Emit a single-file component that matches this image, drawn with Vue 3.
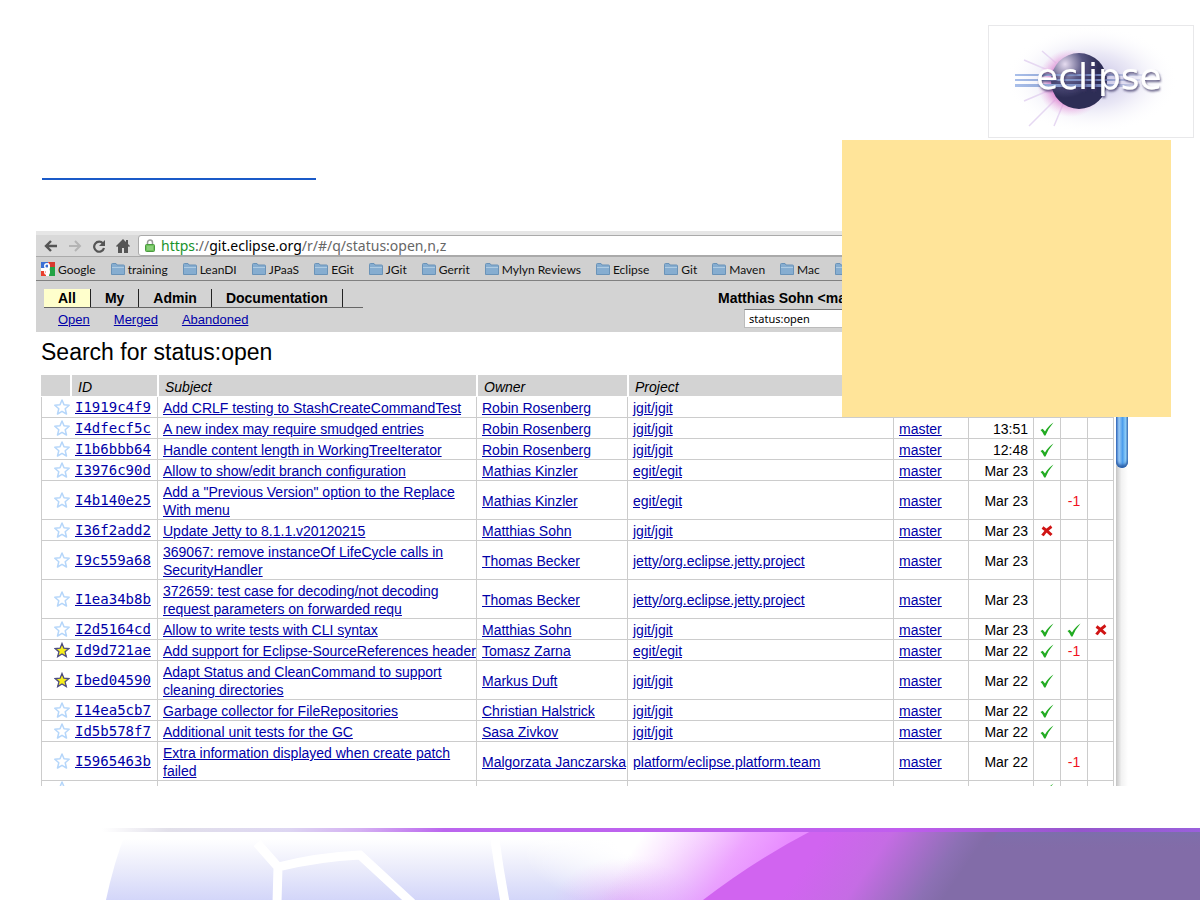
<script setup>
const bookmarks = ['training', 'LeanDI', 'JPaaS', 'EGit', 'JGit', 'Gerrit', 'Mylyn Reviews', 'Eclipse', 'Git', 'Maven', 'Mac', '']
const tabs = ['All', 'My', 'Admin', 'Documentation']
const filters = ['Open', 'Merged', 'Abandoned']

const row = (id, subject, owner, project, date, marks = [], starred = false) => ({ id, subject, owner, project, date, marks, starred })
const changes = [
  row('I1919c4f9', 'Add CRLF testing to StashCreateCommandTest', 'Robin Rosenberg', 'jgit/jgit', ''),
  row('I4dfecf5c', 'A new index may require smudged entries', 'Robin Rosenberg', 'jgit/jgit', '13:51', ['ok']),
  row('I1b6bbb64', 'Handle content length in WorkingTreeIterator', 'Robin Rosenberg', 'jgit/jgit', '12:48', ['ok']),
  row('I3976c90d', 'Allow to show/edit branch configuration', 'Mathias Kinzler', 'egit/egit', 'Mar 23', ['ok']),
  row('I4b140e25', 'Add a "Previous Version" option to the Replace\nWith menu', 'Mathias Kinzler', 'egit/egit', 'Mar 23', ['', '-1']),
  row('I36f2add2', 'Update Jetty to 8.1.1.v20120215', 'Matthias Sohn', 'jgit/jgit', 'Mar 23', ['no']),
  row('I9c559a68', '369067: remove instanceOf LifeCycle calls in\nSecurityHandler', 'Thomas Becker', 'jetty/org.eclipse.jetty.project', 'Mar 23'),
  row('I1ea34b8b', '372659: test case for decoding/not decoding\nrequest parameters on forwarded requ', 'Thomas Becker', 'jetty/org.eclipse.jetty.project', 'Mar 23'),
  row('I2d5164cd', 'Allow to write tests with CLI syntax', 'Matthias Sohn', 'jgit/jgit', 'Mar 23', ['ok', 'ok', 'no']),
  row('Id9d721ae', 'Add support for Eclipse-SourceReferences header', 'Tomasz Zarna', 'egit/egit', 'Mar 22', ['ok', '-1'], true),
  row('Ibed04590', 'Adapt Status and CleanCommand to support\ncleaning directories', 'Markus Duft', 'jgit/jgit', 'Mar 22', ['ok'], true),
  row('I14ea5cb7', 'Garbage collector for FileRepositories', 'Christian Halstrick', 'jgit/jgit', 'Mar 22', ['ok']),
  row('Id5b578f7', 'Additional unit tests for the GC', 'Sasa Zivkov', 'jgit/jgit', 'Mar 22', ['ok']),
  row('I5965463b', 'Extra information displayed when create patch\nfailed', 'Malgorzata Janczarska', 'platform/eclipse.platform.team', 'Mar 22', ['', '-1']),
  row('', '', '', '', '', ['ok'])
]
</script>

<template>
  <div class="slide">
    <header class="slide-head">
      <svg class="logo" viewBox="0 0 206 113" role="img" aria-label="eclipse">
        <defs>
          <radialGradient id="halo"><stop offset="0" stop-color="#8a82c8" stop-opacity=".75" /><stop offset=".5" stop-color="#b8b2e0" stop-opacity=".4" /><stop offset="1" stop-color="#fff" stop-opacity="0" /></radialGradient>
          <radialGradient id="pink"><stop offset=".6" stop-color="#d958c0" stop-opacity=".85" /><stop offset="1" stop-color="#f0a0e0" stop-opacity="0" /></radialGradient>
          <radialGradient id="ball" cx=".25" cy=".2" r=".8"><stop offset="0" stop-color="#e6dcf0" /><stop offset=".4" stop-color="#575582" /><stop offset=".75" stop-color="#2d2d55" /></radialGradient>
          <linearGradient id="beam" gradientUnits="userSpaceOnUse" x1="27" y1="0" x2="177" y2="0"><stop offset="0" stop-color="#a9bfea" /><stop offset=".55" stop-color="#7182b8" /><stop offset="1" stop-color="#d0d4f0" stop-opacity="0" /></linearGradient>
          <filter id="glyphShadow" x="-10%" y="-20%" width="120%" height="150%"><feDropShadow dx="1" dy="2" stdDeviation="1.2" flood-color="#3c3868" flood-opacity=".8" /></filter>
        </defs>
        <rect x=".5" y=".5" width="205" height="112" fill="#fff" stroke="#e8e8ea" />
        <ellipse cx="104" cy="55" rx="86" ry="54" fill="url(#halo)" opacity=".75" />
        <path d="M36 35l26 11M54 26l14 12M36 76l26-11M41 101l26-26M66 101l10-24" stroke="#e6d8f2" stroke-width="1.5" fill="none" />
        <circle cx="83" cy="58" r="34" fill="url(#pink)" opacity=".7" />
        <circle cx="91" cy="56" r="28" fill="url(#ball)" />
        <g fill="url(#beam)"><rect x="27" y="49" width="150" height="2" /><rect x="27" y="54" width="125" height="2" /><rect x="27" y="59" width="125" height="3" /></g>
        <text x="48" y="64" class="wordmark" filter="url(#glyphShadow)">eclipse</text>
      </svg>
      <div class="rule"></div>
    </header>

    <main class="browser">
      <div class="tabstrip"></div>
      <div class="toolbar">
        <button class="nav" aria-label="Back"><svg viewBox="0 0 14 14"><path d="M13 7H3M7 2L2 7l5 5" fill="none" stroke="#555" stroke-width="2.4" /></svg></button>
        <button class="nav" aria-label="Forward"><svg viewBox="0 0 14 14"><path d="M1 7h10M7 2l5 5-5 5" fill="none" stroke="#b4b4b4" stroke-width="2" /></svg></button>
        <button class="nav" aria-label="Reload"><svg viewBox="0 0 14 14"><path d="M11 4.500A5 5 0 1 0 12 9" fill="none" stroke="#555" stroke-width="2.200" /><path d="M13 1v6H7z" fill="#555" /></svg></button>
        <button class="nav" aria-label="Home"><svg viewBox="0 0 14 14"><path d="M7 0L0 7l1 1 1-.8V14h4V9h2v5h4V7.200l1 .8 1-1-2-2V1h-2v2z" fill="#555" /></svg></button>
        <div class="address">
          <svg class="lock" viewBox="0 0 10 13"><path d="M2.500 6V3.500a2.500 2.500 0 0 1 5 0V6" fill="none" stroke="#9a9a9a" stroke-width="1.500" /><rect x=".5" y="5.500" width="9" height="7" rx="1" fill="#6fc25c" stroke="#4a9a40" /><path d="M2 8h6M2 10h6" stroke="#a5dc98" /></svg>
          <span class="url"><b class="secure">https</b>://<b class="host">git.eclipse.org</b>/r/#/q/status:open,n,z</span>
        </div>
      </div>
      <nav class="bookmarks">
        <a href="#" class="google">
          <svg viewBox="0 0 14 14"><rect width="14" height="14" rx="1" fill="#fff" /><path d="M0 0h7v6H0z" fill="#3b6fd4" /><path d="M7 0h7v5H9z" fill="#d8392e" /><path d="M9 5h5v9H8z" fill="#22a345" /><path d="M0 9h5v5H0z" fill="#e8402f" /><circle cx="6" cy="4" r="2.300" fill="none" stroke="#fff" stroke-width="1.400" /><circle cx="6" cy="10" r="2.300" fill="none" stroke="#fff" stroke-width="1.400" /></svg><span>Google</span></a>
        <a v-for="b in bookmarks" :key="b" href="#">
          <svg viewBox="0 0 14 12"><path d="M.5 11.500V1.500q0-1 1-1H5l1 1.500h6.500q1 0 1 1v8.500z" fill="#86add0" stroke="#6a93b8" /><path d="M1 4.500h12" stroke="#aecbe2" /></svg><span>{{ b }}</span></a>
      </nav>

      <div class="viewport">
        <div class="page">
          <div class="menu">
            <div class="menu-left">
              <div class="tabs">
                <button v-for="(t, i) in tabs" :key="t" :class="{ active: i === 0 }">{{ t }}</button>
              </div>
              <div class="filters"><a v-for="f in filters" :key="f" href="#">{{ f }}</a></div>
            </div>
            <div class="account">
              <div class="user">Matthias Sohn &lt;mat</div>
              <input class="search" type="text" value="status:open" aria-label="Search" />
            </div>
          </div>
          <h1>Search for status:open</h1>
          <table>
            <colgroup>
              <col class="c-star" /><col class="c-id" /><col class="c-subject" /><col class="c-owner" /><col />
              <col class="c-branch" /><col class="c-date" /><col class="c-mark" /><col class="c-mark" /><col class="c-mark" />
            </colgroup>
            <thead>
              <tr><th></th><th>ID</th><th>Subject</th><th>Owner</th><th>Project</th><th></th><th></th><th></th><th></th><th></th></tr>
            </thead>
            <tbody>
              <tr v-for="c in changes" :key="c.id">
                <td class="star">
                  <svg viewBox="0 0 16 16">
                    <path v-if="c.starred" d="M8 1.500l1.900 4.700 4.900.4-3.700 3.200 1.200 4.800L8 12l-4.300 2.600 1.200-4.800L1.200 6.600l4.900-.4z" fill="#f7ee1c" stroke="#4c4c80" stroke-width="1.300" />
                    <path v-else d="M8 1l2 4.800 5.200.5-4 3.500 1.300 5.200L8 12.300 3.500 15l1.300-5.200-4-3.500L6 5.800z" fill="#fff" stroke="#b5d6fa" stroke-width="1.500" stroke-linejoin="round" />
                  </svg>
                </td>
                <td class="id"><a href="#">{{ c.id }}</a></td>
                <td><a href="#">{{ c.subject }}</a></td>
                <td><a href="#">{{ c.owner }}</a></td>
                <td><a href="#">{{ c.project }}</a></td>
                <td><a v-if="c.date" href="#">master</a></td>
                <td class="date">{{ c.date }}</td>
                <td v-for="n in 3" :key="n" class="mark">
                  <svg v-if="c.marks[n - 1] === 'ok'" viewBox="0 0 14 14"><path d="M.5 8l2.200-1.200L5 9.500Q8.500 3.500 13.500.5q-5 5.500-8 13H4.200Q3 10 .5 8z" fill="#22ab22" /></svg>
                  <svg v-else-if="c.marks[n - 1] === 'no'" viewBox="0 0 14 14"><path d="M2.500 3.500Q7.500 7 11.500 11M11.500 2.500Q6 6 2.500 11.500" fill="none" stroke="#d01414" stroke-width="3" /></svg>
                  <template v-else>{{ c.marks[n - 1] }}</template>
                </td>
              </tr>
            </tbody>
          </table>
        </div>
        <div class="scrollbar"><div class="thumb"></div></div>
      </div>
    </main>

    <svg class="footer" viewBox="0 0 1200 72" preserveAspectRatio="none" aria-hidden="true">
      <defs>
        <linearGradient id="lav" x1="0" y1="0" x2="0" y2="1"><stop offset=".1" stop-color="#fff" /><stop offset=".5" stop-color="#ecedfb" /><stop offset="1" stop-color="#d3d6f9" /></linearGradient>
        <linearGradient id="line" gradientUnits="userSpaceOnUse" x1="0" y1="0" x2="1200" y2="0"><stop offset=".085" stop-color="#fff" /><stop offset=".14" stop-color="#e2e0ea" /><stop offset=".24" stop-color="#ddd6f2" /><stop offset=".3" stop-color="#d4b0f2" /><stop offset=".37" stop-color="#bb66ee" /><stop offset=".75" stop-color="#c05eee" /><stop offset=".9" stop-color="#9556cc" /><stop offset="1" stop-color="#9a60dc" /></linearGradient>
        <radialGradient id="white" gradientUnits="userSpaceOnUse" cx="0" cy="0" r="1" gradientTransform="translate(640 14) scale(120 66)"><stop offset=".2" stop-color="#fff" /><stop offset="1" stop-color="#fff" stop-opacity="0" /></radialGradient>
        <radialGradient id="glow" gradientUnits="userSpaceOnUse" cx="0" cy="0" r="1" gradientTransform="translate(625 80) scale(75 50)"><stop offset="0" stop-color="#e38bf5" stop-opacity=".5" /><stop offset="1" stop-color="#f0b0ff" stop-opacity="0" /></radialGradient>
        <linearGradient id="edge" gradientUnits="userSpaceOnUse" x1="640" y1="10" x2="745" y2="80"><stop offset="0" stop-color="#f0b0ff" stop-opacity="0" /><stop offset=".7" stop-color="#eb95ff" stop-opacity=".85" /><stop offset="1" stop-color="#e88cff" /></linearGradient>
        <linearGradient id="violet" gradientUnits="userSpaceOnUse" x1="810" y1="30" x2="920" y2="105"><stop offset="0" stop-color="#d164f0" /><stop offset=".4" stop-color="#c56ce4" /><stop offset=".85" stop-color="#8c70b4" /><stop offset="1" stop-color="#826ca8" /></linearGradient>
        <linearGradient id="topShade" x1="0" y1="0" x2="0" y2="1"><stop offset="0" stop-color="#7672b0" /><stop offset="1" stop-color="#826ca8" stop-opacity="0" /></linearGradient>
      </defs>
      <path d="M126 4H830V72H106Q114 34 126 4z" fill="url(#lav)" />
      <path d="M257 15l21 24-1 36M278 39q40-10 82-12l52 48M495 12q4 30 10 62" fill="none" stroke="#fff" stroke-width="9" />
      <rect x="500" y="3" width="320" height="69" fill="url(#white)" />
      <rect x="540" y="3" width="180" height="69" fill="url(#glow)" />
      <path d="M560 4H830V72H560z" fill="url(#edge)" />
      <path d="M811 3Q755 32 703 72H1200V3z" fill="url(#violet)" />
      <path d="M1000 3H1200V24H980z" fill="url(#topShade)" opacity=".5" />
      <rect x="90" width="1110" height="4" fill="url(#line)" />
    </svg>

    <aside class="note"></aside>
  </div>
</template>

<style>
body { margin: 0; background: #fff; }
</style>

<style scoped>
.slide { position: relative; display: flex; flex-direction: column; height: 100vh; overflow: hidden; font-family: "Liberation Sans", Arial, sans-serif; color: #000; }
.slide-head { display: flex; flex-direction: column; flex: none; padding: 25px 6px 51px 42px; }
.logo { align-self: flex-end; width: 206px; height: 113px; }
.wordmark { font-family: "DejaVu Sans", sans-serif; font-size: 36px; fill: #fff; }
.rule { width: 274px; height: 2px; margin-top: 40px; background: #1a5ac8; }
.note { position: absolute; top: 140px; right: 29px; width: 329px; height: 277px; background: #ffe499; }

.browser { display: flex; flex-direction: column; flex: 1 1 0; min-height: 0; margin: 0 72px 42px 36px; overflow: hidden; }
.tabstrip { flex: none; height: 4px; background: #e6e6e6; }
.toolbar { display: flex; flex: none; align-items: center; height: 21px; padding-left: 7px; gap: 8px; background: #d9d9d9; border-bottom: 1px solid #aaa; }
.nav { width: 16px; height: 16px; padding: 1px; border: 0; background: none; }
.nav svg { display: block; width: 14px; height: 14px; }
.address { display: flex; flex: 1; align-items: center; gap: 6px; height: 19px; margin-left: -1px; padding-left: 6px; background: #fff; border: 1px solid #aaa; border-radius: 3px; font: 14px/19px "Noto Sans", sans-serif; color: #666; }
.lock { width: 10px; height: 13px; }
.address b { font-weight: 400; }
.address .secure { color: #18922c; }
.address .host { color: #000; }
.bookmarks { display: flex; flex: none; align-items: center; gap: 15px; height: 23px; padding-left: 5px; overflow: hidden; background: #d0d0d0; border-bottom: 1px solid #808080; font: 12px/20px Lato, sans-serif; }
.bookmarks a { display: flex; flex: none; align-items: center; gap: 3px; color: #111; text-decoration: none; }
.bookmarks span { padding-top: 3px; }
.bookmarks svg { width: 14px; height: 12px; }
.bookmarks .google svg { height: 14px; }

.viewport { display: flex; flex: 1 1 0; min-height: 0; }
.page { flex: 1; min-width: 0; padding-right: 2px; overflow: hidden; }
.menu { display: flex; height: 51px; background: #d3d3d3; }
.menu-left { flex: 1; padding: 8px 0 0 8px; }
.tabs { display: flex; width: 319px; border-bottom: 1px solid #666; }
.tabs button { height: 18px; padding: 0 14px; border: 0; border-right: 1px solid #222; background: none; font: bold 14px/18px "Liberation Sans", Arial, sans-serif; color: #000; }
.tabs button.active { background: #ffffcc; }
.filters { display: flex; gap: 24px; padding: 3px 0 0 14px; font-size: 13px; line-height: 18px; }
.account { flex: none; width: 396px; padding-top: 8px; overflow: hidden; }
.user { font-weight: bold; font-size: 14px; line-height: 19px; white-space: nowrap; }
.search { display: block; box-sizing: border-box; width: 240px; height: 19px; margin: 1px 0 0 26px; padding: 0 4px; border: 1px solid #bbb; border-top-color: #777; background: #fff; font: 11px/16px "Noto Sans", sans-serif; color: #000; }
h1 { margin: 0; padding: 6px 0 9px 5px; font-size: 23px; font-weight: 400; line-height: 28px; }

table { width: calc(100% - 5px); margin-left: 5px; table-layout: fixed; border-collapse: separate; border-spacing: 0; font-size: 14px; line-height: 18px; }
.c-star { width: 29px; }
.c-id { width: 87px; }
.c-subject { width: 319px; }
.c-owner { width: 151px; }
.c-branch { width: 75px; }
.c-date { width: 65px; }
.c-mark { width: 27px; }
th { height: 22px; padding: 2px 0 0 6px; box-sizing: border-box; background: #d3d3d3; border-left: 2px solid #fff; border-bottom: 1px solid #fff; font-weight: 400; font-style: italic; text-align: left; }
th:first-child { border-left: 0; }
td { padding: 2px 0 0 5px; border-left: 1px solid #ccc; border-bottom: 1px solid #ccc; white-space: pre; }
td:last-child { border-right: 1px solid #ccc; }
a { color: #0000a8; text-decoration: underline; }
td.star { padding: 0 0 0 12px; }
td.star svg { display: block; width: 16px; height: 16px; }
td.id { padding: 1px 0 1px 5px; border-left: 0; font-family: "DejaVu Sans Mono", monospace; }
td.date { padding-right: 5px; text-align: right; }
td.mark { padding: 2px 0 0; text-align: center; color: #f01020; }
td.mark svg { display: block; width: 14px; height: 14px; margin: 0 auto; }
.scrollbar { flex: none; width: 12px; background: linear-gradient(90deg, #c4c4c4, #f2f2f2 45%, #fff); }
.thumb { height: 187px; border-radius: 0 0 6px 6px; background: linear-gradient(90deg, #3670c8, #9dccf6 25%, #4a9cec 55%, #8fd0fa 80%, #4a7fc0); box-shadow: inset 0 -3px 3px #2c5fa8; }
.footer { flex: none; display: block; width: 100%; height: 72px; }
</style>
